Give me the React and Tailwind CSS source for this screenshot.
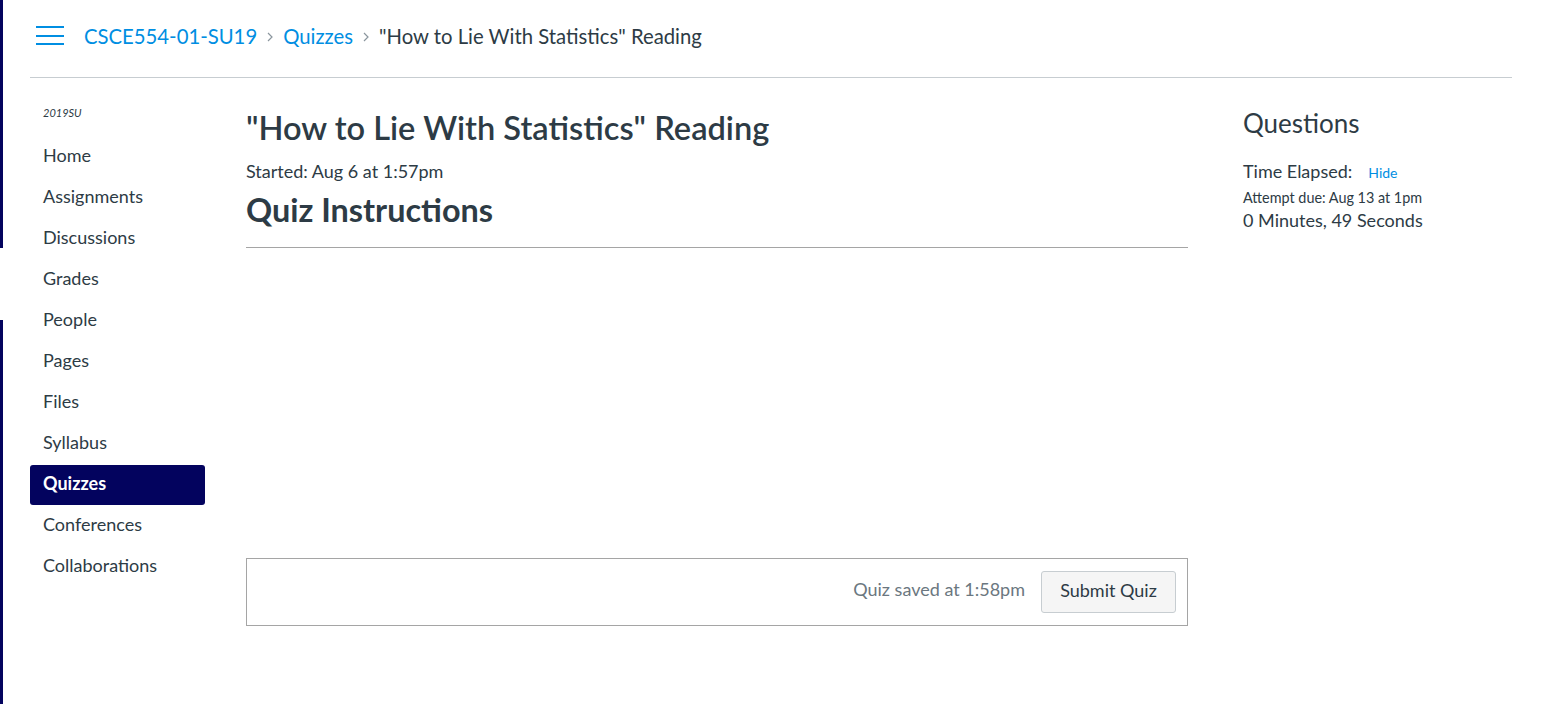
function Chevron() {
  return (
    <svg className="mx-[10px] mt-[2px]" width="6" height="10" viewBox="0 0 6 10" fill="none">
      <path d="M1 1l4 4-4 4" stroke="#8b969e" strokeWidth="1.2" />
    </svg>
  );
}

export default function App() {
  const nav = [
    "Home",
    "Assignments",
    "Discussions",
    "Grades",
    "People",
    "Pages",
    "Files",
    "Syllabus",
    "Quizzes",
    "Conferences",
    "Collaborations",
  ];
  return (
    <div
      className="flex h-[704px] w-[1562px] bg-white text-[#2d3b45] overflow-hidden"
      style={{ fontFamily: "Lato, 'Open Sans', sans-serif" }}
    >
      {/* left edge strip */}
      <div className="flex w-[3px] shrink-0 flex-col">
        <div className="h-[248px] bg-[#03035e]" />
        <div className="h-[72px] bg-white" />
        <div className="flex-1 bg-[#03035e]" />
      </div>

      <div className="ml-[27px] flex w-[1482px] flex-col">
        {/* header */}
        <header className="flex h-[78px] items-center border-b border-[#c7cdd1] pb-[6px]">
          <div className="ml-[6px] flex w-[28px] flex-col gap-[6.5px]">
            <div className="h-[2px] bg-[#008ee2]" />
            <div className="h-[2px] bg-[#008ee2]" />
            <div className="h-[2px] bg-[#008ee2]" />
          </div>
          <nav className="ml-[20px] flex items-center text-[20.3px] leading-[28px]">
            <span className="text-[#008ee2]">CSCE554-01-SU19</span>
            <Chevron />
            <span className="text-[#008ee2]">Quizzes</span>
            <Chevron />
            <span className="text-[#2d3b45]">"How to Lie With Statistics" Reading</span>
          </nav>
        </header>

        <div className="flex">
          {/* sidebar */}
          <aside className="w-[175px] shrink-0 pt-[27px]">
            <div className="pl-[13px] text-[11px] italic leading-[16px] text-[#2d3b45]">
              2019SU
            </div>
            <ul className="mt-[16px]">
              {nav.map((n) => (
                <li
                  key={n}
                  className={
                    n === "Quizzes"
                      ? "mb-[1px] flex h-[40px] items-center rounded-[3px] bg-[#03035e] pb-[3px] pl-[13px] text-[18px] font-bold text-white"
                      : "mb-[1px] flex h-[40px] items-center pb-[3px] pl-[13px] text-[18px] text-[#2d3b45]"
                  }
                >
                  {n}
                </li>
              ))}
            </ul>
          </aside>

          {/* main */}
          <main className="ml-[41px] w-[942px] shrink-0 pt-[30px]">
            <h1 className="text-[32.6px] font-semibold leading-[40px]">
              "How to Lie With Statistics" Reading
            </h1>
            <div className="mt-[12px] text-[18px] leading-[22px]">Started: Aug 6 at 1:57pm</div>
            <h2 className="mt-[10px] text-[32.4px] font-bold leading-[36px]">Quiz Instructions</h2>
            <div className="mt-[19px] border-b border-[#a5a5a5]" />
            <div className="mt-[310px] flex h-[68px] items-center justify-end gap-[16px] border border-[#a5a5a5] pr-[11px]">
              <span className="mb-[5px] text-[18px] text-[#6b7780]">Quiz saved at 1:58pm</span>
              <button className="h-[42px] w-[135px] rounded-[3px] border border-[#c7cdd1] bg-[#f5f5f5] pb-[4px] text-[18px] text-[#2d3b45]">
                Submit Quiz
              </button>
            </div>
          </main>

          {/* right */}
          <aside className="ml-[55px] pt-[29px]">
            <h2 className="text-[26px] font-normal leading-[32px]">Questions</h2>
            <div className="mt-[21px] flex items-baseline text-[18px] leading-[22px]">
              <span>Time Elapsed:</span>
              <span className="ml-[16px] text-[14px] text-[#008ee2]">Hide</span>
            </div>
            <div className="mt-[6px] text-[14.4px] leading-[16px]">Attempt due: Aug 13 at 1pm</div>
            <div className="mt-[3px] text-[18px] leading-[22px]">0 Minutes, 49 Seconds</div>
          </aside>
        </div>
      </div>
    </div>
  );
}
